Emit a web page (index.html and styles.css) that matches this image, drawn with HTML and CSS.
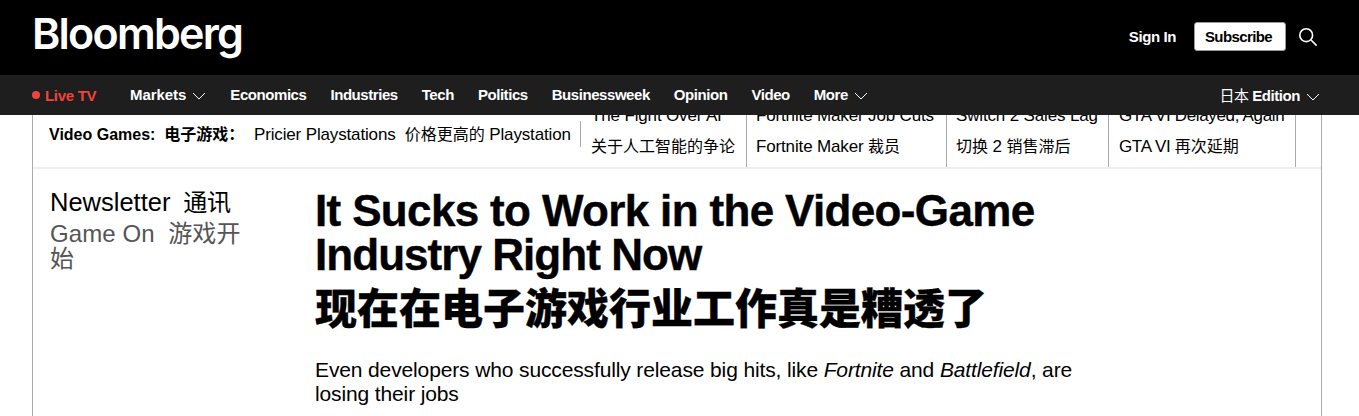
FILE: index.html
```html
<!DOCTYPE html>
<html lang="en">
<head>
<meta charset="utf-8">
<title>Bloomberg</title>
<link rel="stylesheet" href="styles.css">
</head>
<body>
<header class="top">
  <a class="logo">Bloomberg</a>
  <div class="top-actions">
    <a class="signin">Sign In</a>
    <a class="subscribe">Subscribe</a>
    <svg class="search" width="20" height="20" viewBox="0 0 20 20"><circle cx="8.2" cy="8.2" r="6.4" fill="none" stroke="#fff" stroke-width="1.6"/><path d="M12.8 12.8L18.6 18.6" stroke="#fff" stroke-width="1.6" fill="none"/></svg>
  </div>
</header>
<nav class="nav">
  <a class="live"><span class="dot"></span>Live TV</a>
  <ul class="links">
    <li class="wide">Markets<svg class="chev" width="14" height="8" viewBox="0 0 14 8"><path d="M1 1l6 6 6-6" fill="none" stroke="#fff"/></svg></li>
    <li>Economics</li>
    <li>Industries</li>
    <li>Tech</li>
    <li>Politics</li>
    <li>Businessweek</li>
    <li>Opinion</li>
    <li>Video</li>
    <li>More<svg class="chev" width="14" height="8" viewBox="0 0 14 8"><path d="M1 1l6 6 6-6" fill="none" stroke="#fff"/></svg></li>
  </ul>
  <div class="edition"><span class="edition-zh">日本</span> Edition<svg class="chev" width="14" height="8" viewBox="0 0 14 8"><path d="M1 1l6 6 6-6" fill="none" stroke="#fff"/></svg></div>
</nav>
<main class="page">
  <section class="strip">
    <div class="topic"><strong>Video Games:&nbsp; <span class="cjk">电子游戏：</span></strong><span class="lead">Pricier Playstations&nbsp; <span class="cjk">价格更高的</span> Playstation</span></div>
    <div class="story s1"><span>The Fight Over AI</span><span class="cjk">关于人工智能的争论</span></div>
    <div class="story s2"><span>Fortnite Maker Job Cuts</span><span>Fortnite Maker <span class="cjk">裁员</span></span></div>
    <div class="story s3"><span>Switch 2 Sales Lag</span><span><span class="cjk">切换</span> 2 <span class="cjk">销售滞后</span></span></div>
    <div class="story s4"><span>GTA VI Delayed, Again</span><span>GTA VI <span class="cjk">再次延期</span></span></div>
  </section>
  <section class="article">
    <aside class="side">
      <div class="kicker">Newsletter&nbsp; <span class="cjk-lg">通讯</span></div>
      <div class="series">Game On&nbsp; 游戏开始</div>
    </aside>
    <div class="main">
      <h1>It Sucks to Work in the Video-Game <span class="tight">Industry Right Now</span><span class="zh">现在在电子游戏行业工作真是糟透了</span></h1>
      <p class="dek">Even developers who successfully release big hits, like <em>Fortnite</em> and <em>Battlefield</em>, are losing their jobs</p>
    </div>
  </section>
</main>
</body>
</html>
```
FILE: styles.css
```css
* { box-sizing: border-box; }
html, body { margin: 0; padding: 0; height: 416px; overflow: hidden; background: #fff; }
body { font-family: "Liberation Sans", "Noto Sans CJK SC", sans-serif; color: #000; }

.top { height: 75px; background: #000; display: flex; align-items: center; justify-content: space-between; padding: 0 41px 2px 32px; }
.logo { color: #fff; font-family: Inter, sans-serif; font-weight: 600; font-size: 43px; line-height: 42px; letter-spacing: -1.75px; margin-top: -7px; }
.top-actions { display: flex; align-items: center; }
.signin { color: #fff; font-size: 15px; font-weight: 700; margin-right: 18px; letter-spacing: -0.4px; }
.subscribe { background: #fff; color: #000; font-size: 15px; font-weight: 700; height: 29px; width: 92px; border: 1px solid #999; border-radius: 3px; display: flex; align-items: center; justify-content: center; padding-right: 3px; margin-right: 12px; letter-spacing: -0.6px; }
.search { display: block; }

.nav { height: 40px; background: #1e1e1e; display: flex; align-items: center; padding: 0 39px 2px 32px; color: #fff; font-size: 15px; font-weight: 700; letter-spacing: -0.44px; }
.live { color: #f0443c; display: flex; align-items: center; width: 98px; padding-top: 2px; letter-spacing: -0.3px; }
.dot { width: 8px; height: 8px; border-radius: 50%; background: #f0443c; margin-right: 5px; }
.links { display: flex; gap: 24px; list-style: none; margin: 0; padding: 0; flex: 1; }
.links li { white-space: nowrap; }
.links .wide { letter-spacing: -0.05px; }
.chev { margin-left: 6px; }
.edition { white-space: nowrap; }
.edition-zh { font-weight: 400; }

.page { margin: 0 37px 0 32px; border-left: 1px solid #aaa; border-right: 1px solid #aaa; height: 301px; overflow: hidden; }

.strip { height: 54px; display: flex; align-items: flex-end; border-bottom: 2px solid #eee; overflow: hidden; padding-left: 16px; font-size: 17px; letter-spacing: -0.15px; white-space: nowrap; }
.cjk { font-size: 16px; letter-spacing: 0; }
.cjk-lg { font-size: 24px; letter-spacing: 0; margin-left: -1.5px; }
.topic { display: flex; align-self: flex-start; margin-top: 6px; padding-top: 4px; width: 532px; height: 26px; line-height: 20px; border-right: 1px solid #aaa; }
.topic strong { width: 205px; font-size: 16px; letter-spacing: 0; }
.story { display: flex; flex-direction: column; justify-content: flex-end; gap: 11px; padding: 0 10px 10px 10px; height: 90px; line-height: 20px; flex: none; }
.s1 { width: 165px; }
.s2 { width: 200px; border-left: 1px solid #aaa; padding-left: 9px; }
.s3 { width: 162px; border-left: 1px solid #aaa; padding-left: 9px; }
.s4 { width: 188px; border-left: 1px solid #aaa; border-right: 1px solid #aaa; padding-left: 10px; letter-spacing: -0.35px; }

.article { display: flex; padding: 16px 0 0 17px; }
.side { width: 265px; flex: none; }
.kicker { font-size: 25.5px; line-height: 34px; letter-spacing: 0; }
.series { font-size: 24px; line-height: 25px; color: #555; width: 200px; margin-top: 1px; letter-spacing: 0.1px; }
.main { width: 760px; padding-top: 4px; }
h1 { margin: 0; font-size: 44px; line-height: 44px; font-weight: 700; letter-spacing: -0.65px; -webkit-text-stroke: 0.4px #000; }
.tight { letter-spacing: -0.95px; }
.zh { display: block; margin-top: 11px; font-size: 42px; font-weight: 900; letter-spacing: 0; -webkit-text-stroke: 0.3px #000; }
.dek { margin: 26px 0 0; font-size: 21px; line-height: 24px; width: 770px; letter-spacing: -0.13px; }
```
